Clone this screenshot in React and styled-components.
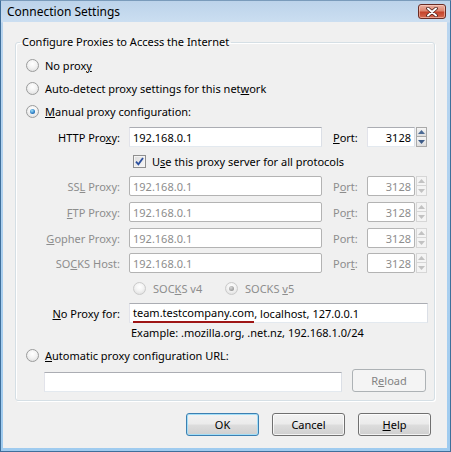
import React from "react";
import styled, { createGlobalStyle } from "styled-components";

const FONT = `"Noto Sans", "Open Sans", sans-serif`;

const GlobalStyle = createGlobalStyle`
  html, body { margin: 0; padding: 0; background: #fff; }
  body { font-family: ${FONT}; font-size: 11px; color: #000; }
`;

const Window = styled.div`
  width: 451px;
  height: 452px;
  box-sizing: border-box;
  border: 1px solid #3f6f9b;
  border-top-color: #7a9bbb;
  padding: 0 3px 3px 2px;
  background: linear-gradient(to bottom, #bcd3ea 0, #cbdef1 21px, #b9d5ef 22px, #9fcbef 100%);
  display: flex;
  flex-direction: column;
`;

const TitleBar = styled.div`
  height: 21px;
  flex: none;
  display: flex;
  align-items: center;
  justify-content: space-between;
  padding-left: 4px;
  font-size: 12px;
`;

const CloseBtn = styled.div`
  width: 28px;
  height: 15px;
  margin-right: 1px;
  box-sizing: border-box;
  border: 1px solid #6a2c24;
  border-radius: 3px;
  background: linear-gradient(#eab0a2 0%, #dd8670 45%, #c5432b 55%, #d56a50 100%);
  box-shadow: inset 0 0 0 1px rgba(255, 220, 210, 0.5);
  display: flex;
  align-items: center;
  justify-content: center;
`;

const Client = styled.div`
  flex: 1;
  background: #f0f0f0;
  padding: 12px 12px 0 12px;
  display: flex;
  flex-direction: column;
`;

const Group = styled.fieldset`
  margin: 0;
  padding: 4px 5px 8px 10px;
  border: 1px solid #d5dfe5;
  border-radius: 3px;
  box-shadow: inset 1px 1px 0 #fff, 1px 1px 0 #fff;
  min-width: 0;
`;

const Legend = styled.legend`
  padding: 0 2px;
  margin-left: -6px;
  line-height: 16px;
`;

const Key = styled.u`
  text-decoration: underline;
  text-underline-offset: 1px;
`;

const OptionRow = styled.div`
  display: flex;
  align-items: center;
  gap: ${(p) => p.$gap || 6}px;
  height: ${(p) => p.$h || 23}px;
  margin-top: ${(p) => p.$top || 0}px;
  margin-left: ${(p) => p.$indent || 0}px;
  color: ${(p) => (p.$disabled ? "#8d8d8d" : "#000")};
`;

const Radio = styled.span`
  position: relative;
  flex: none;
  width: 13px;
  height: 13px;
  box-sizing: border-box;
  border-radius: 50%;
  border: 1px solid ${(p) => (p.$disabled ? "#cacaca" : "#9b9c9c")};
  background: radial-gradient(circle at 50% 35%, #ffffff 0, #f3f3f3 45%, #d9d9d9 100%);
  &::after {
    content: "";
    display: ${(p) => (p.$checked ? "block" : "none")};
    position: absolute;
    left: 3px;
    top: 3px;
    width: 5px;
    height: 5px;
    border-radius: 50%;
    background: ${(p) =>
      p.$disabled
        ? "radial-gradient(circle at 40% 35%, #d8d8d8, #9a9a9a 70%, #7d7d7d)"
        : "radial-gradient(circle at 40% 35%, #9ee0fa, #2a7cc4 60%, #0d3c78)"};
  }
`;

const CheckBox = styled.span`
  flex: none;
  width: 13px;
  height: 13px;
  box-sizing: border-box;
  border: 1px solid #8f8f8f;
  background: linear-gradient(135deg, #dcdcdc, #f8f8f8);
  box-shadow: inset 0 0 0 1px #f4f4f4;
  display: flex;
  align-items: center;
  justify-content: center;
`;

const ProxyRow = styled.div`
  display: flex;
  align-items: center;
  height: 20px;
  margin-top: ${(p) => p.$top || 0}px;
  color: ${(p) => (p.$disabled ? "#8d8d8d" : "#000")};
`;

const FieldLabel = styled.span`
  flex: none;
  width: 94px;
  margin-right: 9px;
  text-align: right;
`;

const TextBox = styled.div`
  flex: none;
  width: ${(p) => p.$w}px;
  height: 20px;
  box-sizing: border-box;
  padding: 0 3px;
  background: #fff;
  border: 1px solid;
  border-color: ${(p) =>
    p.$disabled ? "#b3b3b3" : "#abadb3 #dbdfe6 #e3e9ef #e2e3ea"};
  border-radius: ${(p) => (p.$disabled ? 2 : 0)}px;
  display: flex;
  align-items: center;
  justify-content: ${(p) => (p.$right ? "flex-end" : "flex-start")};
  color: ${(p) => (p.$disabled ? "#8d8d8d" : "#000")};
  white-space: pre;
`;

const PortLabel = styled.span`
  flex: none;
  width: 34px;
  margin-left: 11px;
`;

const SpinButtons = styled.div`
  flex: none;
  width: 11px;
  height: 20px;
  margin-left: 1px;
  display: flex;
  flex-direction: column;
`;

const SpinHalf = styled.div`
  height: 10px;
  box-sizing: border-box;
  border: 1px solid ${(p) => (p.$disabled ? "#d6d6d6" : "#a9a9a9")};
  border-top-width: ${(p) => (p.$down ? 0 : 1)}px;
  background: ${(p) =>
    p.$disabled ? "#f4f4f4" : "linear-gradient(#f6f6f6, #dedede)"};
  display: flex;
  align-items: center;
  justify-content: center;
`;

const Marked = styled.span`
  display: inline-block;
  line-height: 14px;
  padding-bottom: 1px;
  border-bottom: 2px solid #9e1515;
  margin-top: 3px;
`;

const Example = styled.div`
  height: 16px;
  line-height: 16px;
  margin-top: 2px;
  margin-left: 105px;
`;

const UrlRow = styled.div`
  display: flex;
  align-items: flex-end;
  height: 23px;
  margin-top: 2px;
  margin-left: 18px;
  gap: 10px;
`;

const ButtonRow = styled.div`
  display: flex;
  justify-content: flex-end;
  gap: 13px;
  margin-top: 12px;
  margin-right: 4px;
`;

const Button = styled.button`
  width: ${(p) => p.$w || 73}px;
  height: 23px;
  box-sizing: border-box;
  padding: 0;
  font-family: ${FONT};
  font-size: 11px;
  color: ${(p) => (p.disabled ? "#838383" : "#000")};
  border: 1px solid ${(p) => (p.$default ? "#3c7fb1" : p.disabled ? "#adb2b5" : "#707070")};
  border-radius: 3px;
  background: ${(p) =>
    p.disabled
      ? "#f4f4f4"
      : "linear-gradient(#f2f2f2 0%, #ebebeb 48%, #dddddd 52%, #cfcfcf 100%)"};
  box-shadow: ${(p) =>
    p.$default ? "inset 0 0 0 1px #a3def7" : p.disabled ? "none" : "inset 0 0 0 1px rgba(255,255,255,0.75)"};
`;

const Arrow = ({ up, disabled }) => (
  <svg width="7" height="4" viewBox="0 0 7 4">
    <path
      d={up ? "M0 4 L3.5 0 L7 4 Z" : "M0 0 L3.5 4 L7 0 Z"}
      fill={disabled ? "#c2c2c2" : up ? "#4b6a94" : "#3e5c88"}
    />
  </svg>
);

const PortSpinner = ({ disabled }) => (
  <>
    <TextBox $w={48} $right $disabled={disabled}>3128</TextBox>
    <SpinButtons>
      <SpinHalf $disabled={disabled}>
        <Arrow up disabled={disabled} />
      </SpinHalf>
      <SpinHalf $down $disabled={disabled}>
        <Arrow disabled={disabled} />
      </SpinHalf>
    </SpinButtons>
  </>
);

const ProxyLine = ({ label, portKey, top, disabled }) => (
  <ProxyRow $top={top} $disabled={disabled}>
    <FieldLabel>{label}</FieldLabel>
    <TextBox $w={193} $disabled={disabled}>192.168.0.1</TextBox>
    <PortLabel>{portKey}</PortLabel>
    <PortSpinner disabled={disabled} />
  </ProxyRow>
);

export default function App() {
  return (
    <>
      <GlobalStyle />
      <Window>
        <TitleBar>
          <span>Connection Settings</span>
          <CloseBtn>
            <svg width="12" height="10" viewBox="0 0 12 10">
              <path d="M2 1.5 L10 8.5 M10 1.5 L2 8.5" stroke="#4a1f19" strokeWidth="3.6" strokeLinecap="round" />
              <path d="M2 1.5 L10 8.5 M10 1.5 L2 8.5" stroke="#fff" strokeWidth="2" strokeLinecap="round" />
            </svg>
          </CloseBtn>
        </TitleBar>
        <Client>
          <Group>
            <Legend>Configure Proxies to Access the Internet</Legend>
            <OptionRow>
              <Radio />
              <span>
                No prox<Key>y</Key>
              </span>
            </OptionRow>
            <OptionRow>
              <Radio />
              <span>
                Auto-detect proxy settings for this net<Key>w</Key>ork
              </span>
            </OptionRow>
            <OptionRow>
              <Radio $checked />
              <span>
                <Key>M</Key>anual proxy configuration:
              </span>
            </OptionRow>

            <ProxyRow $top={4}>
              <FieldLabel>
                HTTP Pro<Key>x</Key>y:
              </FieldLabel>
              <TextBox $w={193}>192.168.0.1</TextBox>
              <PortLabel>
                <Key>P</Key>ort:
              </PortLabel>
              <PortSpinner />
            </ProxyRow>

            <OptionRow $h={20} $top={4} $indent={107}>
              <CheckBox>
                <svg width="9" height="9" viewBox="0 0 9 9">
                  <path d="M1 4.6 L3.4 7.4 L8 1" fill="none" stroke="#2b4f9e" strokeWidth="1.8" />
                </svg>
              </CheckBox>
              <span>
                U<Key>s</Key>e this proxy server for all protocols
              </span>
            </OptionRow>

            <ProxyLine
              top={5}
              disabled
              label={<>SS<Key>L</Key> Proxy:</>}
              portKey={<>P<Key>o</Key>rt:</>}
            />
            <ProxyLine
              top={6}
              disabled
              label={<><Key>F</Key>TP Proxy:</>}
              portKey={<>Po<Key>r</Key>t:</>}
            />
            <ProxyLine
              top={6}
              disabled
              label={<><Key>G</Key>opher Proxy:</>}
              portKey={<>Port:</>}
            />
            <ProxyLine
              top={5}
              disabled
              label={<>SO<Key>C</Key>KS Host:</>}
              portKey={<>Por<Key>t</Key>:</>}
            />

            <OptionRow $h={20} $top={5} $indent={107} $disabled $gap={7}>
              <Radio $disabled />
              <span style={{ width: 65 }}>
                SOC<Key>K</Key>S v4
              </span>
              <Radio $disabled $checked />
              <span>
                SOCKS <Key>v</Key>5
              </span>
            </OptionRow>

            <ProxyRow $top={5}>
              <FieldLabel>
                <Key>N</Key>o Proxy for:
              </FieldLabel>
              <TextBox $w={299}>
                <Marked>team.testcompany.com</Marked>, localhost, 127.0.0.1
              </TextBox>
            </ProxyRow>
            <Example>Example: .mozilla.org, .net.nz, 192.168.1.0/24</Example>

            <OptionRow $top={3}>
              <Radio />
              <span>
                <Key>A</Key>utomatic proxy configuration URL:
              </span>
            </OptionRow>
            <UrlRow>
              <TextBox $w={298} />
              <Button $w={74} disabled>
                R<Key>e</Key>load
              </Button>
            </UrlRow>
          </Group>
          <ButtonRow>
            <Button $default>OK</Button>
            <Button>Cancel</Button>
            <Button>
              <Key>H</Key>elp
            </Button>
          </ButtonRow>
        </Client>
      </Window>
    </>
  );
}
